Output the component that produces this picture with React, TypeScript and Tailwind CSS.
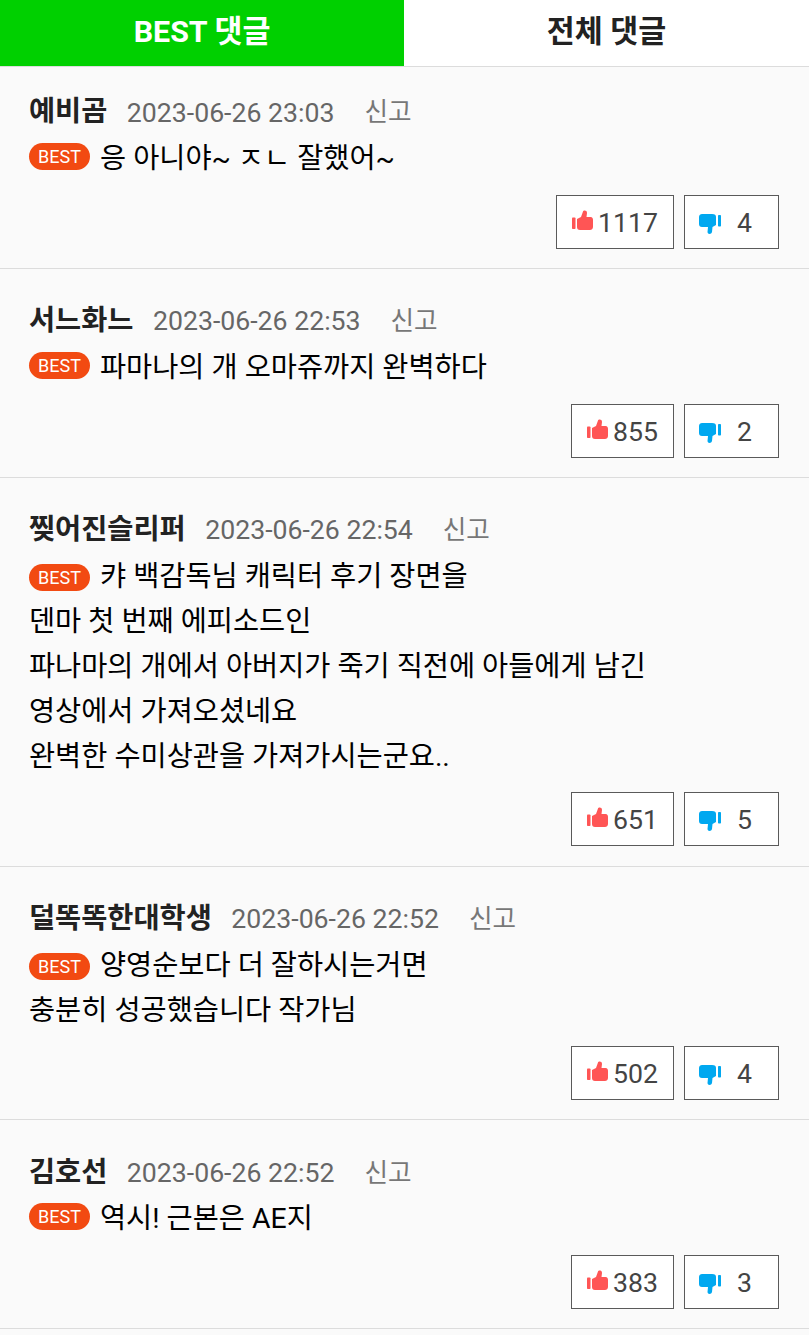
const comments = [
  { name: "예비곰", date: "2023-06-26 23:03", lines: ["응 아니야~ ㅈㄴ 잘했어~"], up: 1117, down: 4 },
  { name: "서느화느", date: "2023-06-26 22:53", lines: ["파마나의 개 오마쥬까지 완벽하다"], up: 855, down: 2 },
  {
    name: "찢어진슬리퍼",
    date: "2023-06-26 22:54",
    lines: [
      "캬 백감독님 캐릭터 후기 장면을",
      "덴마 첫 번째 에피소드인",
      "파나마의 개에서 아버지가 죽기 직전에 아들에게 남긴",
      "영상에서 가져오셨네요",
      "완벽한 수미상관을 가져가시는군요..",
    ],
    up: 651,
    down: 5,
  },
  {
    name: "덜똑똑한대학생",
    date: "2023-06-26 22:52",
    lines: ["양영순보다 더 잘하시는거면", "충분히 성공했습니다 작가님"],
    up: 502,
    down: 4,
  },
  { name: "김호선", date: "2023-06-26 22:52", lines: ["역시! 근본은 AE지"], up: 383, down: 3 },
];

const ThumbUp = () => (
  <svg width="21" height="20" viewBox="0 0 21 20" className="shrink-0 mb-[4px]">
    <rect x="0" y="7.5" width="3.5" height="11.5" rx="0.8" fill="#ff5555" />
    <path
      d="M5 9 L9 7 L11 1.5 C11.5 0 15 0 15 3 L14.5 7 L18.5 7 C20.5 7 21 8.5 21 10 L21 17 C21 19 19.5 20 18 20 L8 20 C6 20 5 19 5 17 Z"
      fill="#ff5555"
    />
  </svg>
);

const ThumbDown = () => (
  <svg width="22" height="20" viewBox="0 0 22 20" className="shrink-0 mt-[4px]">
    <rect x="19" y="1" width="3" height="11.5" rx="0.8" fill="#00a8f0" />
    <path
      d="M17 11 L13.5 13 L13 18 C12.5 20.5 8.5 20.5 8.5 18 L9 13 L3 13 C1 13 0 12 0 10 L0 3 C0 1 1.5 0 3 0 L13 0 C16 0 17 1 17 3 Z"
      fill="#00a8f0"
    />
  </svg>
);

export default function App() {
  return (
    <div className="w-[809px] min-h-[1335px] bg-[#fafafa] font-['Roboto','Noto_Sans_CJK_KR',sans-serif] overflow-hidden">
      <div className="flex h-[67px] bg-white border-b border-[#dcdcdc]">
        <div className="w-[404px] pb-[3px] flex items-center justify-center bg-[#00d000] text-white text-[30.4px] font-bold">
          BEST 댓글
        </div>
        <div className="flex-1 pb-[3px] flex items-center justify-center text-[#222] text-[30.4px] font-bold">
          전체 댓글
        </div>
      </div>

      {comments.map((c, idx) => (
        <div
          key={c.name}
          className={`${idx === 0 ? "pt-[22px]" : "pt-[29px]"} pb-[19.1px] pl-[29px] pr-[30px] border-b border-[#dcdcdc]`}
        >
          <div className="flex items-center h-[45px] pt-[2px]">
            <span className="text-[28.4px] font-bold text-[#222]">{c.name}</span>
            <span className="ml-[19.5px] text-[26.67px] text-[#666]">{c.date}</span>
            <span className="ml-[30px] text-[25.6px] text-[#777]">신고</span>
          </div>
          <div className="text-[28.4px] leading-[45px] text-black">
            {c.lines.map((line, i) => (
              <div key={i} className="flex items-center h-[45px] pt-[4px]">
                {i === 0 && (
                  <span
                    className={`${c.lines.length > 1 ? "mt-[2px]" : "mb-[4px]"} mr-[10px] w-[61px] h-[27px] rounded-full bg-[#f24a12] text-white text-[18px] leading-[27px] text-center`}
                  >
                    BEST
                  </span>
                )}
                <span>{line}</span>
              </div>
            ))}
          </div>
          <div className="flex justify-end gap-[10px] mt-[15.75px]">
            <div className="h-[54px] min-w-[103px] px-[15px] flex items-center justify-center gap-[5px] bg-white border border-[#5a5a5a] text-[26.67px] text-[#444]">
              <ThumbUp />
              <span className="pt-[2px]">{c.up}</span>
            </div>
            <div className="h-[54px] w-[95px] pr-[12px] flex items-center justify-center gap-[16px] bg-white border border-[#5a5a5a] text-[26.67px] text-[#444]">
              <ThumbDown />
              <span className="pt-[2px]">{c.down}</span>
            </div>
          </div>
        </div>
      ))}
    </div>
  );
}
